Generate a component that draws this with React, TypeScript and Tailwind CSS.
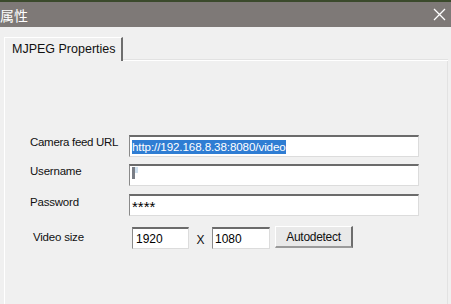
import React from "react";

const font = { fontFamily: '"Liberation Sans", Arial, "Noto Sans CJK SC", sans-serif' };

function Field({ w, children }: { w: string; children?: React.ReactNode }) {
  return (
    <div
      className={`${w} h-[22px] bg-white border-t-2 border-l border-t-[#6b6b6b] border-l-[#8a8a8a] border-r border-b border-r-[#dcdcdc] border-b-[#dcdcdc] flex items-center pl-[2px] text-[12px] text-black`}
    >
      {children}
    </div>
  );
}

export default function App() {
  return (
    <div className="w-[451px] h-[304px] overflow-hidden bg-[#f0f0f0] flex flex-col" style={font}>
      <div className="h-[2px] bg-[#3b4a2c]" />
      <div className="h-[25px] bg-[#7e7977] flex items-center justify-between">
        <span className="text-white text-[14px] leading-none" style={{ fontFamily: '"Noto Sans CJK SC", sans-serif' }}>
          属性
        </span>
        <svg width="13" height="13" viewBox="0 0 13 13" className="mr-[5px]">
          <path d="M1 1 L12 12 M12 1 L1 12" stroke="white" strokeWidth="1.3" />
        </svg>
      </div>
      <div className="flex-1 flex flex-col pt-[10px] pl-[4px] pr-[3px]">
        <div className="flex items-end h-[24px]">
          <div className="w-[119px] h-[24px] border-l border-t border-l-white border-t-white border-r-2 border-r-[#6d6d6d] flex items-center pl-[7px] text-[12.5px] text-[#111] bg-[#f0f0f0]">
            MJPEG Properties
          </div>
          <div className="flex-1 h-[2px] border-b border-b-white border-t border-t-[#e2e2e2]" />
        </div>
        <div className="flex-1 border-l border-l-white border-r border-r-[#e2e2e2] flex flex-col pl-[25px] pt-[74px] text-[12px] text-[#111]">
          <div className="flex items-center h-[22px]">
            <span className="w-[99px] tracking-[-0.3px] text-[11.5px] mb-[7px]">Camera feed URL</span>
            <Field w="w-[290px]">
              <span className="bg-[#2f7dd3] text-white text-[11.6px] leading-[14px] tracking-[-0.1px]">http://192.168.8.38:8080/video</span>
            </Field>
          </div>
          <div className="flex items-center h-[22px] mt-[7px]">
            <span className="w-[99px] tracking-[-0.2px] text-[11.5px] mb-[7px]">Username</span>
            <Field w="w-[290px]">
              <div className="flex h-[12px] mt-[-6px]">
                <div className="w-[3px] bg-[#7a7e86]" />
                <div className="w-[3px] h-[6px] bg-[#cfe0ee]" />
              </div>
            </Field>
          </div>
          <div className="flex items-center h-[22px] mt-[8px]">
            <span className="w-[99px] tracking-[-0.2px] text-[11.5px] mb-[4px]">Password</span>
            <Field w="w-[290px]">
              <span className="text-[15px] leading-none mt-[2px]">****</span>
            </Field>
          </div>
          <div className="flex items-center h-[22px] mt-[11px]">
            <span className="w-[102px] pl-[3px] tracking-[-0.2px] text-[11.5px]">Video size</span>
            <Field w="w-[57px]">
              <span className="pl-[1px]">1920</span>
            </Field>
            <span className="w-[23px] text-center pt-[4px]">X</span>
            <Field w="w-[58px]">
              <span>1080</span>
            </Field>
            <button className="ml-[5px] w-[78px] h-[22px] mt-[-2px] bg-[#e9e9e9] border-l border-t border-l-white border-t-white border-r-2 border-b-2 border-r-[#6d6d6d] border-b-[#9a9a9a] text-[12px] tracking-[-0.3px]">
              Autodetect
            </button>
          </div>
        </div>
      </div>
    </div>
  );
}
